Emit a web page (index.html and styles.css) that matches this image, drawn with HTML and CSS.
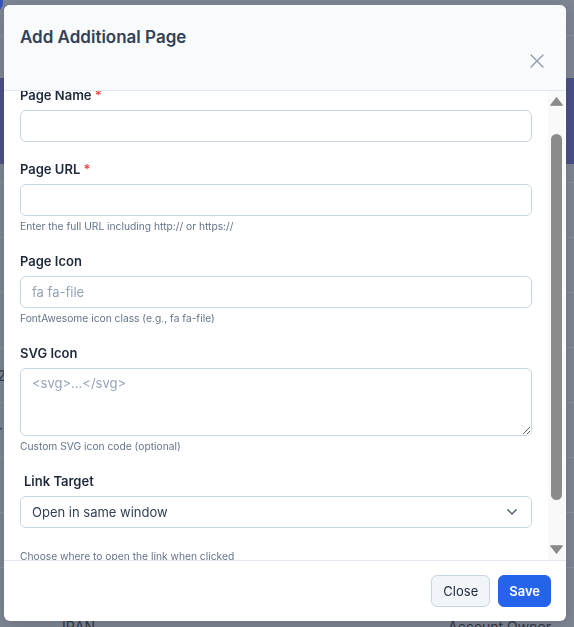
FILE: index.html
```html
<!DOCTYPE html>
<html lang="en">
<head>
<meta charset="utf-8">
<title>Add Additional Page</title>
<link rel="stylesheet" href="styles.css">
</head>
<body>
<div class="app">
  <div class="app-dot"></div>
  <div class="app-top"></div>
  <div class="app-sub"></div>
  <div class="app-band"></div>
  <div class="app-table">
    <div class="app-row head"></div>
    <div class="app-row"></div>
    <div class="app-row"></div>
    <div class="app-row"></div>
    <div class="app-row"><span class="peek">2</span></div>
    <div class="app-row"><span class="peek">r</span></div>
    <div class="app-row"></div>
    <div class="app-row"></div>
    <div class="app-row last"><span class="cell-a">IRAN</span><span class="cell-b">Account Owner</span></div>
  </div>
</div>

<div class="overlay">
  <div class="modal">
    <div class="modal-header">
      <h2 class="modal-title">Add Additional Page</h2>
      <button class="btn-x" type="button" aria-label="Close">
        <svg width="16" height="16" viewBox="0 0 16 16"><path d="M2 2L14 14M14 2L2 14" stroke="#94a3b8" stroke-width="1.5" stroke-linecap="round" fill="none"/></svg>
      </button>
    </div>

    <div class="modal-body">
      <div class="body-content">
        <div class="group first">
          <label class="label">Page Name <span class="req">*</span></label>
          <input class="input" type="text">
        </div>
        <div class="group">
          <label class="label">Page URL <span class="req">*</span></label>
          <input class="input" type="text">
          <div class="help">Enter the full URL including http:// or https://</div>
        </div>
        <div class="group">
          <label class="label">Page Icon</label>
          <input class="input" type="text" placeholder="fa fa-file">
          <div class="help">FontAwesome icon class (e.g., fa fa-file)</div>
        </div>
        <div class="group">
          <label class="label">SVG Icon</label>
          <textarea class="textarea" placeholder="<svg>...</svg>"></textarea>
          <div class="help">Custom SVG icon code (optional)</div>
        </div>
        <div class="group">
          <label class="label indent">Link Target</label>
          <div class="select-wrap">
            <select class="select">
              <option>Open in same window</option>
              <option>Open in new window</option>
            </select>
            <svg class="chev" width="10" height="6" viewBox="0 0 10 6"><path d="M0.8 0.8L5 5L9.2 0.8" stroke="#475569" stroke-width="1.3" fill="none" stroke-linecap="round" stroke-linejoin="round"/></svg>
          </div>
          <div class="help far">Choose where to open the link when clicked</div>
        </div>
      </div>
      <div class="scrollbar">
        <div class="sb-btn up">
          <svg width="13" height="9" viewBox="0 0 13 9"><polygon points="6.5,0.8 12.2,8.2 0.8,8.2" fill="#8a8a8a" stroke="#8a8a8a" stroke-width="1.2" stroke-linejoin="round"/></svg>
        </div>
        <div class="sb-track"><div class="sb-thumb"></div></div>
        <div class="sb-btn down">
          <svg width="13" height="9" viewBox="0 0 13 9"><polygon points="0.8,0.8 12.2,0.8 6.5,8.2" fill="#8a8a8a" stroke="#8a8a8a" stroke-width="1.2" stroke-linejoin="round"/></svg>
        </div>
      </div>
    </div>

    <div class="modal-footer">
      <button class="btn btn-light" type="button">Close</button>
      <button class="btn btn-primary" type="button">Save</button>
    </div>
  </div>
</div>
</body>
</html>
```

FILE: styles.css
```css
* { box-sizing: border-box; }

html, body {
  margin: 0;
  padding: 0;
}

body {
  font-family: Inter, "Noto Sans", "Liberation Sans", sans-serif;
  background: #7e8693;
  width: 574px;
  height: 627px;
  overflow: hidden;
}

/* ---------- dimmed application behind the modal ---------- */
.app {
  position: relative;
  height: 627px;
  overflow: hidden;
  background: #7e8693;
}

.app-dot {
  position: absolute;
  left: -18px;
  top: -8px;
  width: 21px;
  height: 21px;
  border-radius: 50%;
  background: #3352c4;
}

.app-top {
  height: 36px;
  border-bottom: 1px solid #8b929e;
}

.app-sub {
  height: 42px;
}

.app-band {
  height: 86px;
  background: #4b5286;
}

.app-row {
  height: 55px;
  border-bottom: 1px solid #8a919c;
  display: flex;
  align-items: center;
  color: #30363f;
  font-size: 14px;
}

.app-row.head {
  height: 19px;
}

.peek {
  margin-left: -3px;
  color: #3a404b;
}

.app-row.last {
  border-bottom: 0;
  display: grid;
  grid-template-columns: 386px auto;
  align-items: start;
  padding: 50px 0 0 62px;
  height: 80px;
}

/* ---------- overlay + modal ---------- */
.overlay {
  position: fixed;
  inset: 0;
  padding: 5px 8px 0 4px;
}

.modal {
  width: 562px;
  height: 616px;
  background: #ffffff;
  border-radius: 6px;
  display: flex;
  flex-direction: column;
  overflow: hidden;
  box-shadow: 0 4px 16px rgba(15, 23, 42, 0.18);
}

.modal-header {
  height: 86px;
  flex: none;
  background: #f8fafc;
  border-bottom: 1px solid #e2e8f0;
  padding: 20px 21px 21px 16px;
  display: flex;
  justify-content: space-between;
}

.modal-title {
  margin: 0;
  font-size: 17px;
  line-height: 24px;
  font-weight: 600;
  color: #334155;
  align-self: flex-start;
}

.btn-x {
  align-self: flex-end;
  width: 16px;
  height: 16px;
  padding: 0;
  border: 0;
  background: transparent;
  display: block;
}

.btn-x svg { display: block; }

.modal-body {
  height: 469px;
  flex: none;
  display: flex;
}

.body-content {
  flex: 1;
  overflow: hidden;
  padding: 0 16px;
}

.group {
  margin-bottom: 19px;
}

.group.first {
  margin-top: -4px;
}

.label {
  display: block;
  font-size: 13px;
  line-height: 17px;
  font-weight: 600;
  color: #1e293b;
  margin-bottom: 6px;
}

.label.indent {
  padding-left: 4px;
}

.req {
  color: #ef4444;
}

.input,
.textarea,
.select {
  display: block;
  width: 100%;
  border: 1px solid #cbd5e1;
  border-radius: 6px;
  background: #ffffff;
  font-family: Inter, "Noto Sans", "Liberation Sans", sans-serif;
  font-size: 13px;
  color: #334155;
  outline: none;
}

.input {
  height: 32px;
  padding: 0 11px;
}

.textarea {
  height: 68px;
  padding: 5px 11px;
  line-height: 18px;
  resize: vertical;
}

.input::placeholder,
.textarea::placeholder {
  color: #94a3b8;
  opacity: 1;
}

.select-wrap {
  position: relative;
}

.select {
  height: 32px;
  padding: 0 30px 0 11px;
  appearance: none;
  -webkit-appearance: none;
}

.chev {
  position: absolute;
  right: 15px;
  top: 13px;
  display: block;
}

.help {
  margin-top: 2px;
  font-size: 10.25px;
  line-height: 16px;
  color: #64748b;
}

.help.far {
  margin-top: 20px;
}

/* ---------- scrollbar ---------- */
.scrollbar {
  width: 17px;
  margin-right: 1px;
  background: #f9f9f9;
  display: flex;
  flex-direction: column;
}

.sb-btn {
  height: 20px;
  display: flex;
  justify-content: center;
}

.sb-btn.up { padding-top: 6px; }
.sb-btn.down { padding-top: 5px; }

.sb-btn svg { display: block; }

.sb-track {
  flex: 1;
  display: flex;
  justify-content: center;
}

.sb-thumb {
  width: 11px;
  height: 366px;
  margin-top: 23px;
  border-radius: 6px;
  background: #8b8b8b;
}

/* ---------- footer ---------- */
.modal-footer {
  flex: 1;
  border-top: 1px solid #e2e8f0;
  display: flex;
  justify-content: flex-end;
  align-items: flex-start;
  gap: 8px;
  padding: 14px 15px 0 0;
}

.btn {
  height: 32px;
  border-radius: 6px;
  font-family: Inter, "Noto Sans", "Liberation Sans", sans-serif;
  font-size: 13px;
  line-height: 30px;
  cursor: pointer;
}

.btn-light {
  background: #f1f5f9;
  border: 1px solid #cbd5e1;
  color: #1e293b;
  padding: 0 11px;
}

.btn-primary {
  background: #2563eb;
  border: 1px solid #2563eb;
  color: #ffffff;
  font-weight: 600;
  padding: 0 10px;
}
```
